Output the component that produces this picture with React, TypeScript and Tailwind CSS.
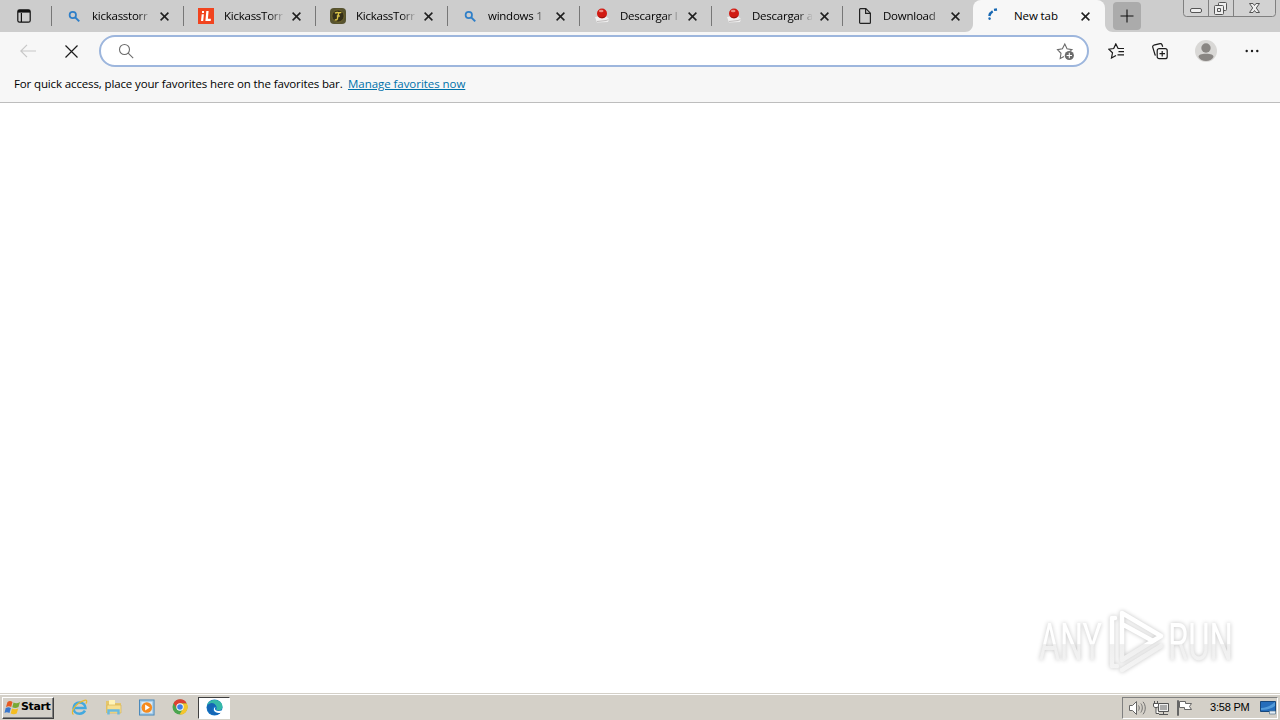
import type { ReactNode } from 'react'

function SearchIcon() {
  return (
    <svg width="16" height="16" viewBox="0 0 16 16" fill="none" stroke="#2f7fc8" strokeWidth="1.7">
      <circle cx="6.8" cy="7" r="3.2" />
      <path d="M9.2 9.4l4 4" strokeWidth="2" />
    </svg>
  )
}

function IlIcon() {
  return (
    <svg width="16" height="16" viewBox="0 0 16 16">
      <path fill="#f1441f" d="M0 0h16v16H0z" />
      <path fill="#fff" d="M4 3h2v2H4zM3.7 6.2h2.2L5.2 13H3zM8.3 3h2.3l-.7 7.8h3l-.2 2.2H7.4z" />
    </svg>
  )
}

function TorrentIcon() {
  return (
    <svg width="16" height="16" viewBox="0 0 16 16">
      <rect width="16" height="16" rx="4" fill="#57532f" />
      <circle cx="8" cy="8" r="6.2" fill="#35301a" stroke="#74682c" />
      <path d="M5 5.2c2-1.600 4 .3 6.300-.9M8.700 4.800L7.300 11c-.4 1-1.400 1.300-2.500.6M6.800 8h3" fill="none" stroke="#d8c348" strokeWidth="1.400" />
    </svg>
  )
}

function RedBallIcon() {
  return (
    <svg width="16" height="16" viewBox="0 0 16 16">
      <path d="M1 9l10-1.500 4 3.500-1 3L3 14.500z" fill="#efefef" />
      <path d="M3 13.500l9-1 2.500-1" stroke="#c0bcbc" fill="none" />
      <circle cx="8" cy="5.500" r="5" fill="#d11a12" />
      <path d="M3.700 7.800c2 2 6.300 2 8.500-.2a5 5 0 0 1-8.500.2z" fill="#8c1510" />
      <ellipse cx="7.200" cy="3" rx="2.300" ry="1.300" fill="#ed8a80" />
    </svg>
  )
}

function PageIcon() {
  return (
    <svg width="16" height="16" viewBox="0 0 16 16" fill="none" stroke="#222" strokeWidth="1.2">
      <path d="M2.6 1.5c0-.5.4-.9.9-.9h5.3l4.6 4.6v9.3c0 .5-.4.9-.9.9h-9c-.5 0-.9-.4-.9-.9z" />
      <path d="M8.6.8v4.6h4.6" />
    </svg>
  )
}

function SpinnerIcon() {
  return (
    <svg width="16" height="16" viewBox="0 0 16 16" fill="none" stroke="#1768b3" strokeWidth="2.4">
      <path d="M2.3 8c.4-2 1.300-3.500 3.400-4.700M7 1.900l3-.4" />
      <circle cx="2.600" cy="10.600" r=".6" strokeWidth="1.400" />
    </svg>
  )
}

const tabs: { title: string; icon: ReactNode }[] = [
  { title: 'kickasstorr', icon: <SearchIcon /> },
  { title: 'KickassTorr', icon: <IlIcon /> },
  { title: 'KickassTorr', icon: <TorrentIcon /> },
  { title: 'windows 1', icon: <SearchIcon /> },
  { title: 'Descargar l', icon: <RedBallIcon /> },
  { title: 'Descargar a', icon: <RedBallIcon /> },
  { title: 'Download', icon: <PageIcon /> },
]

function CloseIcon() {
  return (
    <svg width="9" height="9" viewBox="0 0 9 9" stroke="#1f1f1f" strokeWidth="1.5">
      <path d="M.6.6l7.8 7.8M8.4.6L.6 8.4" />
    </svg>
  )
}

function TabStrip() {
  return (
    <div className="flex h-8 bg-[#cdcdcd]">
      <div className="flex w-[51px] shrink-0 items-center pl-[17px]">
        <svg width="14" height="14" viewBox="0 0 14 14" fill="none" stroke="#111" strokeWidth="1.2">
          <rect x=".8" y=".8" width="12.4" height="12.4" rx="1.8" />
          <path d="M4.4 4v9" />
          <path d="M1 2.300h12" strokeWidth="2.600" />
        </svg>
      </div>
      <div className="grid w-[922px] shrink-0 grid-cols-[repeat(5,132px)_131px_131px]">
        {tabs.map((tab, i) => (
          <div key={i} className="flex items-center">
            <span className="h-5 w-px bg-[#777]" />
            <span className="ml-[14px] w-4">{tab.icon}</span>
            <span className="ml-[10px] w-[60px] whitespace-nowrap bg-linear-to-r from-black from-75% to-[#00000010] bg-clip-text text-[11.5px] tracking-[-0.25px] text-transparent">
              {tab.title}
            </span>
            <span className="ml-[8px]"><CloseIcon /></span>
          </div>
        ))}
      </div>
      <div className="relative flex w-[132px] shrink-0 items-center rounded-t-lg bg-[#f7f7f7]">
        <svg className="absolute -left-2 bottom-0" width="8" height="8" viewBox="0 0 8 8" fill="#f7f7f7">
          <path d="M8 0v8H0c4.500 0 8-3.500 8-8z" />
        </svg>
        <svg className="absolute -right-2 bottom-0" width="8" height="8" viewBox="0 0 8 8" fill="#f7f7f7">
          <path d="M0 0v8h8C3.500 8 0 4.500 0 0z" />
        </svg>
        <span className="ml-[14px] w-4"><SpinnerIcon /></span>
        <span className="ml-[11px] w-[59px] whitespace-nowrap text-[11.5px] tracking-[-0.1px] text-black">New tab</span>
        <span className="ml-[8px]"><CloseIcon /></span>
      </div>
      <div className="ml-[8px] mt-[2px] flex h-7 w-7 items-center justify-center rounded bg-[#ababab]">
        <svg width="14" height="14" viewBox="0 0 14 14" stroke="#111" strokeWidth="1.100">
          <path d="M7 .5v13M.5 7h13" />
        </svg>
      </div>
      <svg className="ml-[42px]" width="93" height="18" viewBox="0 0 93 18" fill="none" stroke="#808080">
        <path d="M.5 0v13.500a3 3 0 0 0 3 3h86a3 3 0 0 0 3-3V0M25.500 0v16.500M50.500 0v16.500" fill="#d2d2d2" />
        <rect x="7.500" y="8.500" width="11" height="4" rx="1.500" fill="#eee" stroke="#555" />
        <rect x="35.500" y="2.500" width="8" height="8" rx="1" fill="#eee" stroke="#555" />
        <rect x="31.500" y="5.500" width="9" height="9" rx="1" fill="#eee" stroke="#555" />
        <path d="M34.500 8.500h3v3h-3z" stroke="#555" />
        <path d="M66.500 3.500h3.500l1.500 2 1.500-2h3.500L73.300 8l3.200 4.500H73l-1.500-2-1.500 2h-3.500L69.700 8z" fill="#eee" stroke="#555" />
      </svg>
    </div>
  )
}

function Toolbar() {
  return (
    <div className="flex h-[38px] items-center bg-[#f7f7f7]">
      <svg className="ml-[20px]" width="16" height="14" viewBox="0 0 16 14" fill="none" stroke="#c7c7c7" strokeWidth="1.200">
        <path d="M16 7H1M7 .8L.8 7 7 13.200" />
      </svg>
      <svg className="ml-[29px]" width="13" height="13" viewBox="0 0 13 13" stroke="#1b1b1b" strokeWidth="1.200">
        <path d="M.5.5l12 12M12.500.5l-12 12" />
      </svg>
      <div className="ml-[21px] flex h-8 w-[990px] shrink-0 items-center justify-between rounded-full border-2 border-[#9db6dd] bg-white pl-[17px] pr-[12px]">
        <svg width="16" height="16" viewBox="0 0 16 16" fill="none" stroke="#6b6b6b" strokeWidth="1.100">
          <circle cx="6.500" cy="6.500" r="5" />
          <path d="M10.200 10.200l5 5" />
        </svg>
        <svg width="19" height="19" viewBox="0 0 19 19" fill="none" stroke="#6b6b6b" strokeWidth="1.100">
          <path d="M8 14.500l-3.800 2 .8-5.200-3.500-3.700 4.900-.8L8.800 2l2.200 4.800 4.900.8-2.100 1.800" />
          <circle cx="13.300" cy="13.500" r="4.600" fill="#6b6b6b" stroke="none" />
          <path d="M13.300 10.800v5.400M10.600 13.500H16" stroke="#fff" />
        </svg>
      </div>
      <svg className="ml-[19px]" width="17" height="16" viewBox="0 0 17 16" fill="none" stroke="#1b1b1b" strokeWidth="1.200">
        <path d="M8 12.500L3.500 15l1-5.200L.8 6.200 5.700 5.500 7.800.9l2.300 4.600H16M10.500 8.700H16M9.500 11.900H16" />
      </svg>
      <svg className="ml-[27px]" width="17" height="17" viewBox="0 0 17 17" fill="none" stroke="#1b1b1b" strokeWidth="1.200">
        <rect x="5.200" y="5.700" width="10" height="10" rx="2" />
        <path d="M10.200 8v5.500M7.500 10.700H13M3.800 12.300l-.7-.3L.8 4.300C.5 3.300.9 2.500 1.800 2.200L8 .7c1-.3 1.700.1 2 1l.7 2" />
      </svg>
      <svg className="ml-[26px]" width="22" height="22" viewBox="0 0 22 22">
        <circle cx="11" cy="11" r="11" fill="#d9d8d6" />
        <circle cx="11" cy="8" r="4.700" fill="#898683" />
        <path d="M3.500 17c0-2 2.500-3.200 7.500-3.200s7.500 1.200 7.500 3.200c-1.500 2.500-4 4-7.500 4s-6-1.500-7.500-4z" fill="#898683" />
      </svg>
      <svg className="ml-[28px]" width="14" height="4" viewBox="0 0 14 4" fill="#1b1b1b">
        <circle cx="1.700" cy="2" r="1.200" />
        <circle cx="7" cy="2" r="1.200" />
        <circle cx="12.300" cy="2" r="1.200" />
      </svg>
    </div>
  )
}

function Watermark() {
  return (
    <svg className="drop-shadow-[0_0_2px_#c4c4c4]" width="204" height="72" viewBox="0 0 204 72">
      <defs>
        <linearGradient id="logoFade" gradientUnits="userSpaceOnUse" x1="0" y1="0" x2="0" y2="72">
          <stop offset=".54" stopColor="#fff" />
          <stop offset=".55" stopColor="#efefef" />
          <stop offset="1" stopColor="#f5f5f5" />
        </linearGradient>
      </defs>
      <g fill="url(#logoFade)" fontFamily="Roboto, 'Liberation Sans', sans-serif" fontSize="51">
        <text x="4" y="55" textLength="63" lengthAdjust="spacingAndGlyphs">ANY</text>
        <text x="133" y="55" textLength="65" lengthAdjust="spacingAndGlyphs">RUN</text>
      </g>
      <g fill="none" stroke="url(#logoFade)" strokeWidth="4.500" strokeLinejoin="round" strokeLinecap="round">
        <path d="M87 43V8l39 23-39 24V19l31 17" />
        <path d="M80 13h-3v48h5M87 65l39-24" />
      </g>
    </svg>
  )
}

function WindowsFlag() {
  return (
    <svg width="17" height="16" viewBox="0 0 16 16">
      <path d="M3 2c2-1.500 3.500-1 5 0L6.700 7C5 6 3.500 6 1.500 7z" fill="#e65a23" />
      <path d="M9 2.500c2 1 4 1 6.500-.5L14 7c-2 1.200-4 1.200-6.200.3z" fill="#78a936" />
      <path d="M1.200 8c2-1 3.500-1 5.200 0L5 13c-2-1-3.500-1-5 0z" fill="#3977cd" />
      <path d="M7.500 8.500c2 1 4 1 6.200 0l-1.500 5c-2 1-4 1-6 0z" fill="#f5bd21" />
    </svg>
  )
}

function Taskbar() {
  return (
    <div className="flex h-[27px] items-center border-t border-[#d4d0c8] bg-[#d4d0c8] shadow-[inset_0_1px_0_#fff]">
      <div className="ml-[2px] mt-px flex h-[22px] w-[52px] items-center border border-t-white border-l-white border-r-[#404040] border-b-[#404040] pl-px shadow-[inset_-1px_-1px_0_#808080]">
        <WindowsFlag />
        <span className="whitespace-nowrap font-['DejaVu_Sans',sans-serif] text-[11px] font-bold tracking-[-0.4px] text-black">Start</span>
      </div>
      <svg className="ml-[17px]" width="17" height="17" viewBox="0 0 17 17" fill="none">
        <path d="M14 11.700c-1 1.800-3 3-5.500 3-3.500 0-6-2.500-6-5.500s2.500-5.700 6-5.700 6 2.700 6 5.500H4" stroke="#43a9df" strokeWidth="2.500" />
        <path d="M2.500 15.500C-1 14 4 4 13.500 1.300c2.500-.7 3 1 1.300 3.400" stroke="#e7b92f" strokeWidth="1.200" />
      </svg>
      <svg className="ml-[17px]" width="17" height="17" viewBox="0 0 17 17">
        <path d="M1 2h5l1 2h9v10H1z" fill="#e5c66b" />
        <path d="M4 1h6v7H4z" fill="#fff4b8" />
        <path d="M2 6h14v8H2z" fill="#f7df8e" stroke="#d7b657" strokeWidth=".7" />
        <path d="M3.500 15.500v-4h10v4" fill="none" stroke="#68b9df" strokeWidth="2.400" />
      </svg>
      <svg className="ml-[17px]" width="16" height="17" viewBox="0 0 17 17">
        <rect x=".5" y=".5" width="15.500" height="16" fill="#a5cbe8" stroke="#4686b9" />
        <rect x="2.500" y="2.500" width="11.500" height="12" fill="#d8e9f5" />
        <circle cx="8.300" cy="8.400" r="5.600" fill="#f68b1e" />
        <path d="M6.500 5.200v6.400l5-3.200z" fill="#fff" />
      </svg>
      <svg className="ml-[17px]" width="16" height="16" viewBox="0 0 16 16">
        <circle cx="8" cy="8" r="7.500" fill="#4aa54e" />
        <path d="M1.500 4.300A7.500 7.500 0 0 1 14.800 4.500H8L5 9.500z" fill="#dd4032" />
        <path d="M14.800 4.500H9l2.500 4.500-4 6.500A7.500 7.500 0 0 0 14.800 4.500z" fill="#f5c52c" />
        <circle cx="8" cy="8" r="3.700" fill="#fff" />
        <circle cx="8" cy="8" r="2.800" fill="#3f7ee8" />
      </svg>
      <div className="ml-[10px] mt-px flex h-[22px] w-[32px] items-center justify-center border border-t-[#404040] border-l-[#404040] border-r-white border-b-white bg-white">
        <svg width="17" height="17" viewBox="0 0 17 17">
          <circle cx="8.500" cy="8.500" r="8" fill="#1476c6" />
          <path d="M1 7c1-8 15-8 15.500.5 0 4-4 4.500-6.500 3 2-2 0-5.500-3.500-5C4 5.500 2 6 1 7z" fill="#35b9a8" />
          <path d="M1 7c3-5 9-3 9 1-2-2-5 1-3 4 2 3 6 2 8 1-5 6-14 2-14-6z" fill="#1566b5" />
          <path d="M9.500 8c-.5 1-1 2 0 3 1.500 1.300 4 1.200 7.500 0l-1.500 2.500c-3 1.300-6.500.2-7.500-2-.5-1.500.2-3.200 1.500-3.500z" fill="#fff" />
        </svg>
      </div>
      <div className="ml-auto mt-px mr-[2px] flex h-[22px] w-[156px] items-center border border-t-[#808080] border-l-[#808080] border-r-white border-b-white pl-[6px]">
        <svg width="17" height="16" viewBox="0 0 17 16" stroke="#666">
          <path d="M.5 5.500h3l4-4v13l-4-4h-3z" fill="#fff" />
          <path d="M9.500 5.500c1 1.500 1 3.500 0 5M11.800 3.500c2 2.500 2 6 0 9M14 1.800c3 3.500 3 9 0 12.500" fill="none" strokeWidth=".9" />
        </svg>
        <svg className="ml-[7px]" width="16" height="16" viewBox="0 0 16 16" stroke="#555" fill="#eee">
          <path d="M5.500 3.500h10v8h-10zM10.500 12v2M6 14.500h9" />
          <path d="M7 5h7v5H7z" fill="#aaa" stroke="none" />
          <path d="M.5 3.500h5v3l-1.500 1H2l-1.500-1zM1.500 1v2M4.500 1v2M3 8v5.500h3" fill="#fff" />
        </svg>
        <svg className="ml-[7px]" width="17" height="16" viewBox="0 0 17 16" stroke="#666" fill="#fff">
          <path d="M1.500.5h1v15h-1z" />
          <path d="M3.500 1.500h6v2h6l-2 3 2 3h-7v-2h-5z" />
        </svg>
        <span className="ml-[17px] w-10 whitespace-nowrap font-['Liberation_Sans',sans-serif] text-[11px] tracking-[-0.2px] text-black">3:58 PM</span>
        <svg className="ml-[10px]" width="16" height="15" viewBox="0 0 16 15">
          <path d="M.5 1.500h15v10H.5z" fill="#256dbb" stroke="#17477c" />
          <path d="M1 8c5 0 9-2 14-6v4c-4 3-9 4-14 4z" fill="#539bd9" />
          <path d="M9.500 11h6v3h-6z" fill="#e3edf5" stroke="#55738c" strokeWidth=".7" />
        </svg>
      </div>
    </div>
  )
}

export default function App() {
  return (
    <div className="flex h-screen w-screen flex-col overflow-hidden bg-white font-['Open_Sans','Noto_Sans',sans-serif]">
      <TabStrip />
      <Toolbar />
      <div className="flex h-[33px] items-center border-b border-[#bdbdbd] bg-[#f7f7f7] pb-[5px] pl-[14px] text-[11.500px] text-black">
        <span className="w-[334px] whitespace-nowrap tracking-[-0.13px]">
          For quick access, place your favorites here on the favorites bar.
        </span>
        <a className="whitespace-nowrap tracking-[-0.05px] text-[#0072aa] underline">Manage favorites now</a>
      </div>
      <main className="flex flex-1 items-end justify-end pr-[41px] pb-[16px]">
        <Watermark />
      </main>
      <Taskbar />
    </div>
  )
}
